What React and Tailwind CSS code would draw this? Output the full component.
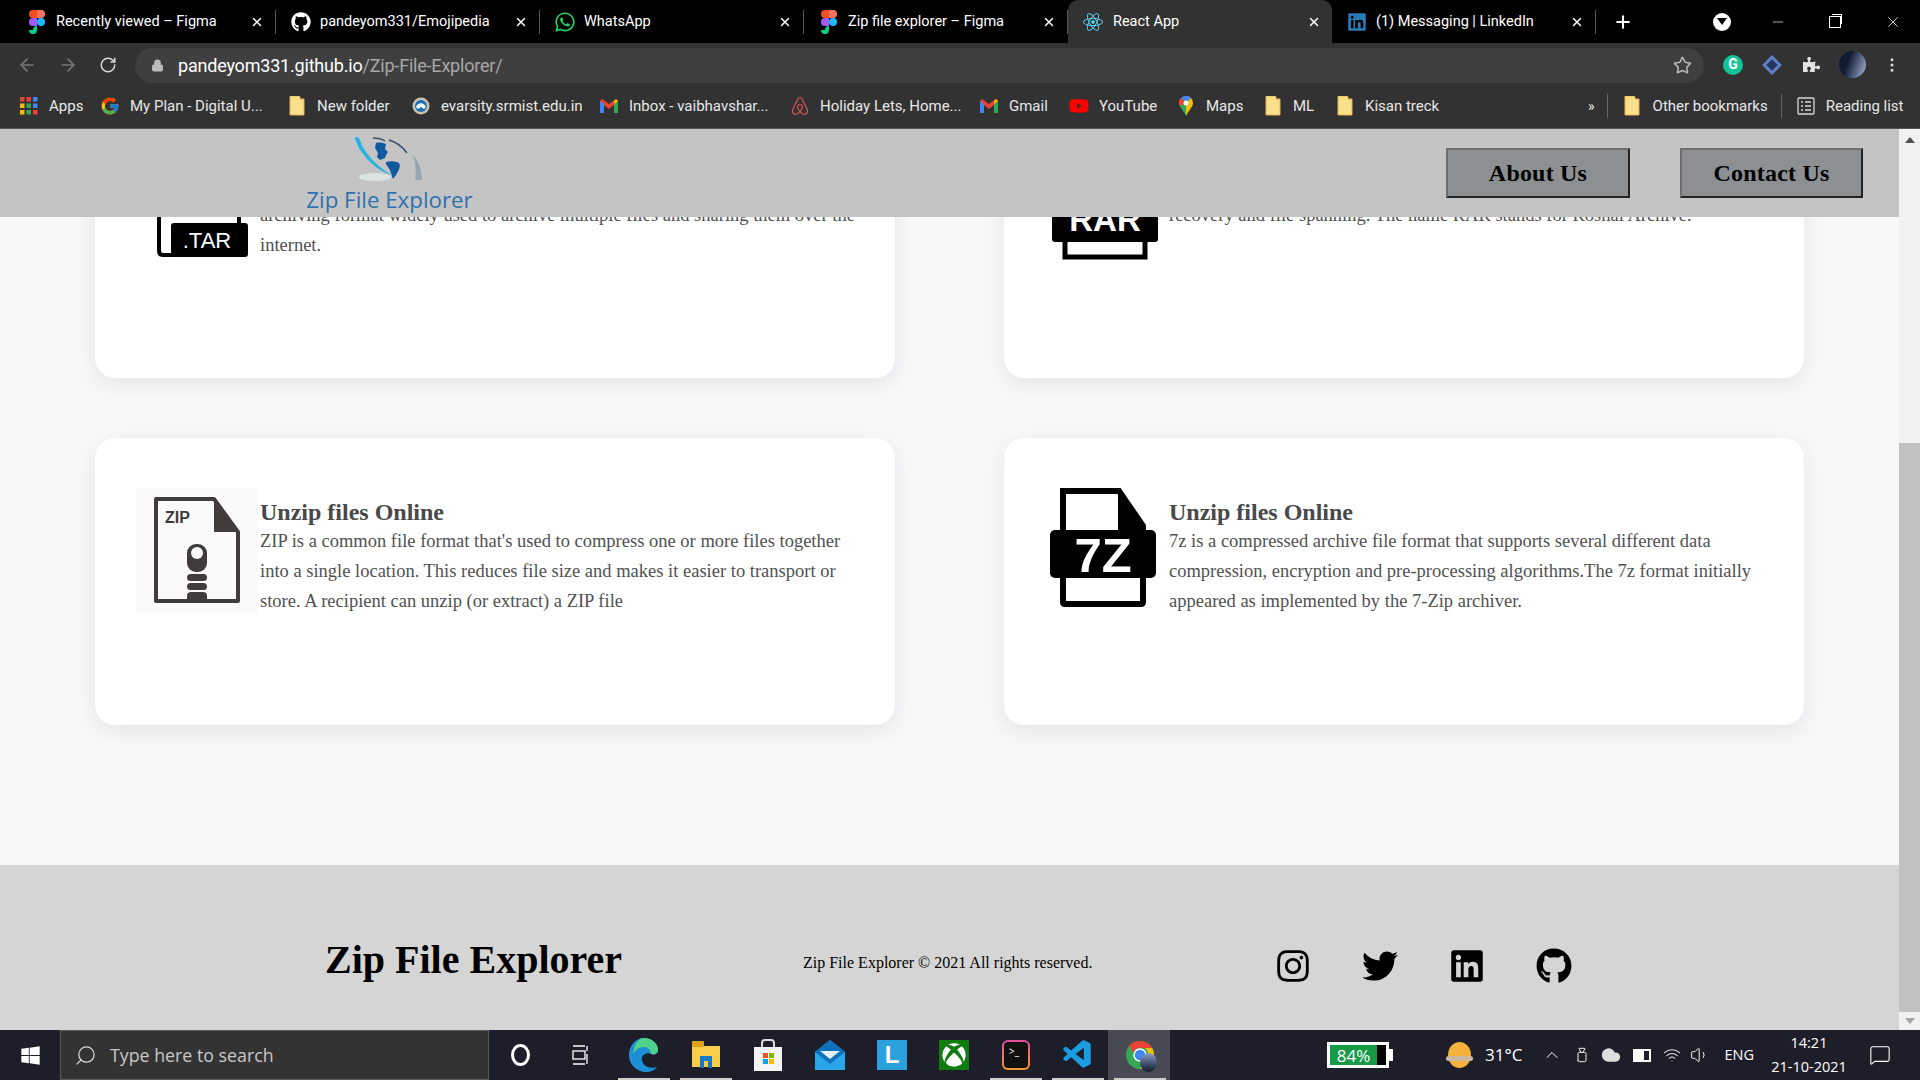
import React from "react";
import { ArrowLeft, ArrowRight, RotateCw, Lock, Star, Search, ChevronUp, Plus, X, Minus, EllipsisVertical, Wifi, Volume1, MessageSquare, Cloud, Video } from "lucide-react";
import { FaGithub, FaWhatsapp, FaReact, FaLinkedin, FaYoutube, FaAirbnb, FaWindows, FaXbox, FaPuzzlePiece, FaInstagram, FaTwitter } from "react-icons/fa";
import { FcGoogle } from "react-icons/fc";
import { VscVscode } from "react-icons/vsc";

const Figma = () => (
  <svg width="16" height="24" viewBox="0 0 16 24">
    <circle cx="12" cy="12" r="4" fill="#1abcfe" />
    <path d="M4 20a4 4 0 0 1 4-4v4a4 4 0 0 1-8 0z" transform="translate(0 0)" fill="#0acf83" />
    <path d="M0 12a4 4 0 0 1 4-4h4v8H4a4 4 0 0 1-4-4z" fill="#a259ff" />
    <path d="M0 4a4 4 0 0 1 4-4h4v8H4a4 4 0 0 1-4-4z" fill="#f24e1e" />
    <path d="M8 0h4a4 4 0 0 1 0 8H8z" fill="#ff7262" />
  </svg>
);

const Folder = () => (
  <svg width="16" height="20" viewBox="0 0 16 20">
    <path d="M1 0h9l1 1v2h4v16H1z" fill="#fbe08c" stroke="#e2b44a" strokeWidth="1" />
  </svg>
);

const Gmail = () => (
  <svg width="18" height="14" viewBox="0 0 18 14">
    <path d="M0 2v12h4V6l5 4 5-4v8h4V2l-2-2-7 5-7-5z" fill="#ea4335" />
    <path d="M0 2v12h4V5z" fill="#4285f4" />
    <path d="M14 5v9h4V2z" fill="#34a853" />
    <path d="M16 0l2 2-4 3V2z" fill="#fbbc04" />
  </svg>
);

const Maps = () => (
  <svg width="14" height="20" viewBox="0 0 14 20">
    <path d="M7 0a7 7 0 0 1 7 7c0 4-5 8-7 13z" fill="#fbbc04" />
    <path d="M7 0a7 7 0 0 0-7 7c0 4 5 8 7 13z" fill="#34a853" />
    <path d="M2 2a7 7 0 0 1 10 0L7 7z" fill="#4285f4" />
    <path d="M2 2L7 7 1 10C0 8-1 5 2 2z" fill="#ea4335" />
    <circle cx="7" cy="7" r="2.5" fill="#fff" />
  </svg>
);

const AppsIcon = () => (
  <svg width="18" height="18" viewBox="0 0 18 18">
    {[0, 1, 2].map((r) =>
      [0, 1, 2].map((c) => (
        <rect key={`${r}${c}`} x={c * 6.5} y={r * 6.5} width="4.5" height="4.5"
          fill={[["#ea4335", "#ea4335", "#4285f4"], ["#fbbc04", "#34a853", "#4285f4"], ["#fbbc04", "#34a853", "#ea4335"]][r][c]} />
      ))
    )}
  </svg>
);

const Srm = () => (
  <svg width="18" height="18" viewBox="0 0 18 18">
    <circle cx="9" cy="9" r="8.5" fill="#c9c3b0" />
    <circle cx="9" cy="9" r="6" fill="#1c6fb5" />
    <path d="M4 10c2-5 8-5 10 0l-2 2-3-2-3 2z" fill="#fff" />
  </svg>
);

const Reading = () => (
  <svg width="18" height="18" viewBox="0 0 18 18" fill="none" stroke="#d8d8d8" strokeWidth="1.3">
    <rect x="1" y="1" width="16" height="16" rx="1" />
    <path d="M4 5h2M8 5h6M4 9h2M8 9h6M4 13h2M8 13h6" />
  </svg>
);

const tabs = [
  { icon: <Figma />, title: "Recently viewed – Figma" },
  { icon: <FaGithub className="text-[20px] text-white" />, title: "pandeyom331/Emojipedia" },
  { icon: <FaWhatsapp className="text-[22px] text-[#25d366]" />, title: "WhatsApp" },
  { icon: <Figma />, title: "Zip file explorer – Figma" },
  { icon: <FaReact className="text-[20px] text-[#61dafb]" />, title: "React App", active: true },
  { icon: <FaLinkedin className="text-[20px] text-[#2a7ab8]" />, title: "(1) Messaging | LinkedIn" },
];

const marks = [
  { icon: <AppsIcon />, t: "Apps", w: "w-[81px]" },
  { icon: <FcGoogle className="text-[20px]" />, t: "My Plan - Digital U...", w: "w-[187px]" },
  { icon: <Folder />, t: "New folder", w: "w-[124px]" },
  { icon: <Srm />, t: "evarsity.srmist.edu.in", w: "w-[188px]" },
  { icon: <Gmail />, t: "Inbox - vaibhavshar...", w: "w-[191px]" },
  { icon: <FaAirbnb className="text-[20px] text-[#e0565b]" />, t: "Holiday Lets, Home...", w: "w-[189px]" },
  { icon: <Gmail />, t: "Gmail", w: "w-[90px]" },
  { icon: <FaYoutube className="text-[20px] text-[#f00]" />, t: "YouTube", w: "w-[107px]" },
  { icon: <Maps />, t: "Maps", w: "w-[87px]" },
  { icon: <Folder />, t: "ML", w: "w-[72px]" },
  { icon: <Folder />, t: "Kisan treck", w: "w-[120px]" },
];

function TarIcon() {
  return (
    <svg width="122" height="124" viewBox="0 0 122 124">
      <path d="M23 4h56l24 26v60M23 4v106q0 4 4 4h10" fill="none" stroke="#000" strokeWidth="4" />
      <rect x="35" y="82" width="77" height="34" rx="3" fill="#000" />
      <text x="71" y="107" textAnchor="middle" fill="#fff" fontSize="22" fontFamily="'Liberation Sans',sans-serif">.TAR</text>
    </svg>
  );
}

function RarIcon() {
  return (
    <svg width="122" height="124" viewBox="0 0 122 124">
      <path d="M20 48V4h56l24 26v18" fill="none" stroke="#000" strokeWidth="5" />
      <rect x="7" y="48" width="106" height="53" rx="3" fill="#000" />
      <text x="60" y="90" textAnchor="middle" fill="#fff" fontSize="33" fontWeight="700" fontFamily="'Liberation Sans',sans-serif">RAR</text>
      <path d="M20 100v16h80v-16" fill="none" stroke="#000" strokeWidth="5" />
    </svg>
  );
}

function ZipIcon() {
  return (
    <div className="w-[122px] h-[124px] bg-[#fafafa] shrink-0">
      <svg width="122" height="124" viewBox="0 0 122 124">
        <path d="M20 11h58l24 33v69H20z" fill="none" stroke="#403c3c" strokeWidth="4" strokeLinejoin="round" />
        <path d="M78 10l25 34H78z" fill="#403c3c" />
        <text x="29" y="35" fill="#403c3c" fontSize="16" fontWeight="700" fontFamily="'Liberation Sans',sans-serif">ZIP</text>
        <rect x="51" y="56" width="20" height="28" rx="9" fill="#403c3c" />
        <circle cx="61" cy="65" r="6" fill="#fafafa" />
        <rect x="51" y="86" width="20" height="7" rx="3.5" fill="#403c3c" />
        <rect x="51" y="95" width="20" height="7" rx="3.5" fill="#403c3c" />
        <path d="M51 108a4 4 0 0 1 4-4h12a4 4 0 0 1 4 4v4H51z" fill="#403c3c" />
      </svg>
    </div>
  );
}

function SevenIcon() {
  return (
    <svg width="122" height="124" viewBox="0 0 122 124" className="shrink-0">
      <path d="M18 44V3h56l24 35v6M18 90v24q0 2 2 2h76q2 0 2-2V90" fill="none" stroke="#000" strokeWidth="6" />
      <path d="M73 0l28 40v5H73z" fill="#000" />
      <rect x="5" y="42" width="106" height="48" rx="5" fill="#000" />
      <text x="58" y="84" textAnchor="middle" fill="#fff" fontSize="49" fontWeight="700" fontFamily="'Liberation Sans',sans-serif">7Z</text>
    </svg>
  );
}

function Card({ icon, title, textTop, children }) {
  return (
    <div className="h-[287px] bg-white rounded-[20px] shadow-[0_6px_20px_rgba(100,110,130,0.14)] pt-[50px] pl-[41px] pr-[35px] flex items-start">
      {icon}
      <div className={`${textTop} w-[600px] ml-[2px]`}>
        <h3 className="text-[24px] leading-[28px] font-bold text-[#494949]">{title}</h3>
        <p className="text-[18.5px] leading-[30px] text-[#515151]">{children}</p>
      </div>
    </div>
  );
}

function Logo() {
  return (
    <svg width="70" height="46" viewBox="0 0 70 46">
      <path d="M0 1C3 14 18 32 36 38 20 28 8 14 5 3c-1-3-4-4-5-2z" fill="#22b4e6" />
      <path d="M21 6c4-1 7 0 10 1l-1 5 3 3-2 3-1 3-5 2-3-3 1-4-3-5z" fill="#0f5a9e" />
      <path d="M31 25c4-1 9-1 13 1 2 3 0 7-3 12l-3 4-3-9-4-6z" fill="#0f5a9e" />
      <path d="M18 1c5 0 9 1 12 3M34 3c7 2 13 6 18 13" fill="none" stroke="#39536f" strokeWidth="1.5" />
      <path d="M58 18c4 3 9 14 9 25h-7c2-8 0-18-2-25z" fill="#9aa6ae" />
      <ellipse cx="20" cy="40" rx="16" ry="4" fill="#dde3e3" />
    </svg>
  );
}

const slots = [
  <div className="w-[19px] h-[22px] rounded-[50%] border-[3px] border-white" />,
  <svg width="20" height="20" viewBox="0 0 20 20" fill="none" stroke="#fff" strokeWidth="1.3"><path d="M1 1h12M1 19h12M15 1v5M15 9v10" /><rect x="1" y="6" width="12" height="8" /></svg>,
  <svg width="30" height="34" viewBox="0 0 30 34"><path d="M15 0C6 0 0 8 0 17c0 10 8 17 17 17 5 0 9-2 11-5-6 2-14 0-15-7-1-5 5-8 9-6 3 1 6 0 7-3C29 6 23 0 15 0z" fill="#1c8fd6" /><path d="M15 0c8 0 15 6 14 13-1 3-4 4-7 3 0-4-3-7-7-7-5 0-9 3-11 7C5 7 9 0 15 0z" fill="#4fd28a" /></svg>,
  <svg width="28" height="28" viewBox="0 0 28 28"><path d="M0 2h10l2 3h16v21H0z" fill="#f8cd49" /><rect x="0" y="0" width="12" height="6" rx="1" fill="#e0a21b" /><path d="M8 27V15h12v12h-4v-7h-4v7z" fill="#1479c8" /></svg>,
  <svg width="28" height="32" viewBox="0 0 28 32"><path d="M8 8V4q0-3 3-3h6q3 0 3 3v4" fill="none" stroke="#ddd" strokeWidth="2" /><rect y="8" width="28" height="24" fill="#f4f4f4" /><rect x="9" y="14" width="5" height="5" fill="#f25022" /><rect x="15" y="14" width="5" height="5" fill="#7fba00" /><rect x="9" y="20" width="5" height="5" fill="#00a4ef" /><rect x="15" y="20" width="5" height="5" fill="#ffb900" /></svg>,
  <svg width="30" height="30" viewBox="0 0 30 30"><path d="M15 0l15 12v18H0V12z" fill="#2aa6e8" /><path d="M0 12l15 12 15-12-15-12z" fill="#0f70bd" /><path d="M5 11h20l-10 8z" fill="#dff2fd" /></svg>,
  <div className="w-[30px] h-[30px] bg-[#2aa0dc] relative flex items-center justify-center"><span className="text-[24px] leading-none font-bold text-white font-['Liberation_Sans',sans-serif]">L</span></div>,
  <div className="w-[30px] h-[30px] bg-[#107c10] flex items-center justify-center"><FaXbox className="text-[24px] text-white" /></div>,
  <div className="w-[28px] h-[30px] rounded-[6px] bg-[linear-gradient(#e54d9e,#f59a36)] p-[2px]"><div className="w-full h-full rounded-[4px] bg-[#111] pl-[5px] pt-[4px] text-[10px] leading-none text-white">&gt;_</div></div>,
  <VscVscode className="text-[34px] text-[#1b9de2]" />,
  <div className="relative"><svg width="28" height="28" viewBox="0 0 28 28"><circle cx="14" cy="14" r="14" fill="#34a853" /><path d="M14 0a14 14 0 0 1 12.1 7H14a7 7 0 0 0-6.5 4.5L3 5A14 14 0 0 1 14 0z" fill="#ea4335" /><path d="M26.1 7A14 14 0 0 1 14 28l6-10a7 7 0 0 0-1-11z" fill="#fbbc04" /><circle cx="14" cy="14" r="6" fill="#4285f4" stroke="#fff" strokeWidth="1.5" /></svg><div className="absolute -bottom-[3px] -right-[3px] w-[17px] h-[19px] rounded-[50%] bg-[linear-gradient(#8b9cc9,#101624)]" /></div>,
];

export default function App() {
  return (
    <div className="h-screen w-screen overflow-hidden flex flex-col font-['Liberation_Serif',serif] bg-[#f8f8f9]">
      {/* tab strip */}
      <div className="h-[43px] shrink-0 bg-black flex items-center pl-[12px] text-white font-['Roboto',sans-serif] text-[14.5px]">
        {tabs.map((t) => (
          <div key={t.title} className={t.active ? "w-[264px] h-[43px] flex items-center bg-[#323232] rounded-t-[10px] pl-[12px] pr-[11px]" : "w-[264px] h-[24px] flex items-center border-r border-[#555] pl-[14px] pr-[11px]"}>
            <span className={t.active ? "w-[30px] flex justify-center shrink-0 -ml-[2px]" : "w-[30px] flex justify-center shrink-0 -ml-[4px]"}>{t.icon}</span>
            <span className={t.active ? "ml-[5px] flex-1 truncate" : "ml-[4px] flex-1 truncate"}>{t.title}</span>
            <X size={14} strokeWidth={2.5} />
          </div>
        ))}
        <Plus size={20} strokeWidth={2.5} className="ml-[17px]" />
        <div className="ml-[80px] w-[18px] h-[18px] rounded-full bg-white flex items-center justify-center"><div className="w-0 h-0 border-x-[5px] border-x-transparent border-t-[7px] border-t-black" /></div>
        <Minus size={16} strokeWidth={1} className="ml-[39px]" />
        <div className="ml-[43px] relative w-[12px] h-[12px] border border-white"><div className="absolute -top-[3px] left-[2px] w-[10px] h-[10px] border-t border-r border-white" /></div>
        <X size={18} strokeWidth={1} className="ml-[43px]" />
      </div>
      {/* toolbar */}
      <div className="h-[43px] shrink-0 bg-[#323232] flex items-center text-white">
        <ArrowLeft size={20} className="ml-[17px] text-[#777]" />
        <ArrowRight size={20} className="ml-[21px] text-[#777]" />
        <RotateCw size={18} className="ml-[21px] text-[#d8d8d8]" />
        <div className="ml-[18px] w-[1569px] h-[35px] rounded-full bg-[#3f3f3f] flex items-center pl-[16px] pr-[12px] mt-[1px]">
          <Lock size={13} className="text-[#bbb] fill-[#bbb]" />
          <span className="ml-[14px] text-[18px] tracking-[-0.2px] font-['Roboto',sans-serif]">pandeyom331.github.io<span className="text-[#a8a8a8]">/Zip-File-Explorer/</span></span>
          <Star size={19} className="ml-auto text-[#b8b8b8]" />
        </div>
        <div className="ml-[19px] w-[20px] h-[20px] rounded-full bg-[#15c39a] flex items-center justify-center text-[14px] font-bold font-['Roboto',sans-serif]">G</div>
        <div className="ml-[22px] w-[14px] h-[14px] rotate-45 bg-[#26365f] border-[3px] border-[#5f7fc4]" />
        <FaPuzzlePiece className="ml-[24px] text-[17px] text-[#e3e3e3]" />
        <div className="ml-[19px] w-[27px] h-[27px] rounded-full bg-[linear-gradient(110deg,#111b30_35%,#a9b6de)]" />
        <EllipsisVertical size={18} className="ml-[17px] text-[#d8d8d8]" />
      </div>
      {/* bookmarks */}
      <div className="h-[43px] shrink-0 bg-[#323232] border-b border-[#555] flex items-center pl-[19px] pb-[2px] text-[#e8e8e8] font-['Roboto',sans-serif] text-[15px]">
        {marks.map((m) => (
          <div key={m.t} className={`${m.w} flex items-center shrink-0`}>
            <span className="w-[20px] flex justify-center">{m.icon}</span>
            <span className="ml-[10px] whitespace-nowrap">{m.t}</span>
          </div>
        ))}
        <span className="ml-[133px] text-[14px]">»</span>
        <div className="ml-[12px] w-px h-[24px] bg-[#666]" />
        <span className="ml-[16px] flex"><Folder /></span>
        <span className="ml-[13px] whitespace-nowrap">Other bookmarks</span>
        <div className="ml-[13px] w-px h-[24px] bg-[#666]" />
        <span className="ml-[15px] flex"><Reading /></span>
        <span className="ml-[11px] whitespace-nowrap">Reading list</span>
      </div>

      {/* viewport */}
      <div className="h-[901px] shrink-0 flex">
        <div className="relative flex-1 overflow-hidden">
          <div className="-mt-[38px]">
            <div className="grid grid-cols-[800px_800px] gap-x-[109px] gap-y-[60px] pl-[95px] mb-[140px]">
              <Card icon={<TarIcon />} title="Unzip files Online" textTop="mt-[1px]">
                TAR is an open source utility for collecting many files into one file. It is an<br />
                archiving format widely used to archive multiple files and sharing them over the internet.
              </Card>
              <Card icon={<RarIcon />} title="Unzip files Online" textTop="mt-[1px]">
                RAR is a proprietary archive file format that supports data compression, error<br />
                recovery and file spanning. The name RAR stands for Roshal Archive.
              </Card>
              <Card icon={<ZipIcon />} title="Unzip files Online" textTop="mt-[10px]">
                ZIP is a common file format that's used to compress one or more files together into a single location. This reduces file size and makes it easier to transport or store. A recipient can unzip (or extract) a ZIP file
              </Card>
              <Card icon={<SevenIcon />} title="Unzip files Online" textTop="mt-[10px]">
                7z is a compressed archive file format that supports several different data compression, encryption and pre-processing algorithms.The 7z format initially appeared as implemented by the 7-Zip archiver.
              </Card>
            </div>
            <footer className="h-[165px] bg-[#d5d5d5] flex items-center pt-[36px] text-black">
              <h2 className="ml-[325px] w-[478px] text-[40px] leading-none font-bold -mt-[12px]">Zip File Explorer</h2>
              <p className="w-[472px] text-[16px] -mt-[6px]">Zip File Explorer © 2021 All rights reserved.</p>
              <div className="flex gap-[51px] text-[36px]">
                <FaInstagram /><FaTwitter /><FaLinkedin /><FaGithub />
              </div>
            </footer>
          </div>
          {/* sticky header over the page */}
          <header className="absolute top-0 left-0 right-0 h-[88px] bg-[#c4c4c4] flex items-center justify-between pl-[306px] pr-[36px]">
            <div className="w-[167px] flex flex-col items-center pt-[3px]">
              <Logo />
              <span className="text-[22.3px] leading-[26px] mt-[4px] text-[#2f72ad] font-['Open_Sans',sans-serif] whitespace-nowrap">Zip File Explorer</span>
            </div>
            <nav className="flex gap-[50px]">
              <button className="w-[184px] h-[50px] bg-[#8c9093] border-2 border-t-[#6e6e6e] border-l-[#6e6e6e] border-r-[#222] border-b-[#222] text-[24px] font-bold text-black tracking-[0.2px]">About Us</button>
              <button className="w-[183px] h-[50px] bg-[#8c9093] border-2 border-t-[#6e6e6e] border-l-[#6e6e6e] border-r-[#222] border-b-[#222] text-[24px] font-bold text-black tracking-[0.2px]">Contact Us</button>
            </nav>
          </header>
        </div>
        {/* scrollbar */}
        <div className="w-[21px] bg-[#f1f1f1] flex flex-col items-center">
          <div className="h-[21px] flex items-center justify-center"><div className="w-0 h-0 border-x-[5px] border-x-transparent border-b-[6px] border-b-[#505050]" /></div>
          <div className="mt-[293px] w-full h-[569px] bg-[#c1c1c1]" />
          <div className="mt-auto h-[18px] flex items-center justify-center"><div className="w-0 h-0 border-x-[5px] border-x-transparent border-t-[6px] border-t-[#a3a3a3]" /></div>
        </div>
      </div>

      {/* taskbar */}
      <div className="h-[50px] shrink-0 bg-[#1e1e2a] flex items-center text-white font-['Open_Sans',sans-serif]">
        <div className="w-[60px] flex justify-center"><FaWindows className="text-[21px]" /></div>
        <div className="w-[429px] h-[50px] bg-[#333333] border border-[#5a5a5a] flex items-center pl-[13px]">
          <Search size={23} strokeWidth={1.3} className="-scale-x-100 text-[#d8d8d8]" />
          <span className="ml-[13px] text-[17.8px] text-[#c8c8c8]">Type here to search</span>
        </div>
        {slots.map((s, i) => (
          <div key={i} className="relative w-[62px] h-[50px] flex items-center justify-center shrink-0">
            {i === 10 && <div className="absolute inset-y-0 left-[-1px] right-[1px] bg-[#4a4a55]" />}
            <div className="relative">{s}</div>
            {(i === 2 || i === 3 || i === 8 || i === 9 || i === 10) && <div className="absolute bottom-0 left-[5px] right-[5px] h-[2px] bg-[#d4cfcf]" />}
          </div>
        ))}
        <div className="ml-[156px] relative w-[62px] h-[26px] border-[3px] border-white bg-black">
          <div className="h-full w-[84%] bg-[#169a46] flex items-center justify-center text-[17px] leading-none">84%</div>
          <div className="absolute -right-[7px] top-[4px] w-[4px] h-[12px] bg-white" />
        </div>
        <div className="ml-[59px] w-[23px] h-[26px] rounded-[50%] bg-[#f4b13c] relative"><div className="absolute left-[-2px] right-[-2px] top-[14px] h-[5px] rounded-full bg-[#ccb9a0]" /></div>
        <span className="ml-[14px] text-[17px] whitespace-nowrap">31°C</span>
        <ChevronUp size={20} strokeWidth={1.2} className="ml-[20px]" />
        <Video size={16} strokeWidth={1.4} className="ml-[12px] -rotate-90" />
        <Cloud size={20} className="ml-[11px] fill-[#ddd] text-[#ddd]" />
        <div className="ml-[12px] w-[18px] h-[13px] border-2 border-white flex"><div className="w-[9px] bg-white" /></div>
        <Wifi size={18} strokeWidth={1.4} className="ml-[12px] text-[#ddd]" />
        <Volume1 size={20} strokeWidth={1.2} className="ml-[9px]" />
        <span className="ml-[14px] text-[14.5px] whitespace-nowrap">ENG</span>
        <div className="ml-[19px] w-[72px] flex flex-col items-center text-[14.5px] leading-[24px] whitespace-nowrap">
          <span>14:21</span>
          <span>21-10-2021</span>
        </div>
        <MessageSquare size={22} strokeWidth={1.2} className="ml-[24px]" />
      </div>
    </div>
  );
}
